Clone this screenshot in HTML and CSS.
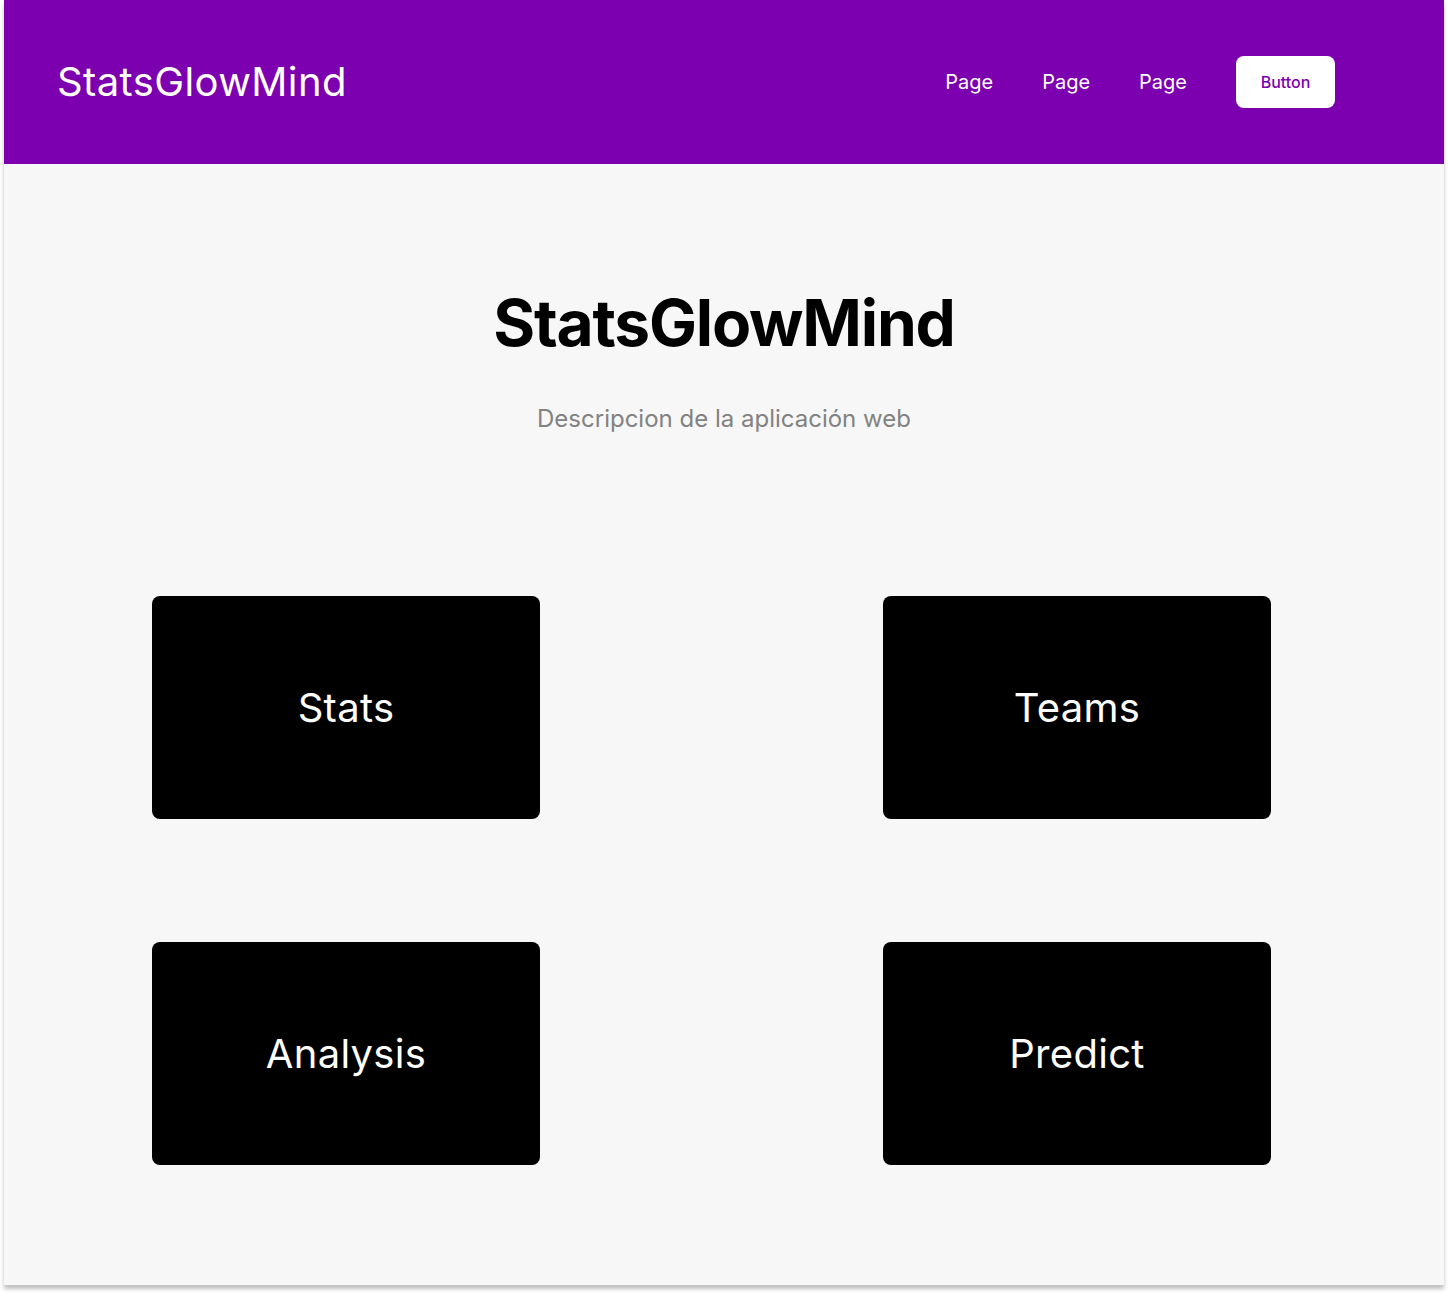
FILE: index.html
```html
<!DOCTYPE html>
<html lang="es">
<head>
<meta charset="utf-8">
<title>StatsGlowMind</title>
<link rel="stylesheet" href="styles.css">
</head>
<body>
<div class="frame">
  <header class="topbar">
    <div class="logo">StatsGlowMind</div>
    <nav class="nav">
      <a class="nav-link" href="#">Page</a>
      <a class="nav-link" href="#">Page</a>
      <a class="nav-link" href="#">Page</a>
      <a class="nav-btn" href="#">Button</a>
    </nav>
  </header>
  <main class="main">
    <section class="hero">
      <h1 class="hero-title">StatsGlowMind</h1>
      <p class="hero-sub">Descripcion de la aplicación web</p>
    </section>
    <section class="cards">
      <a class="card" href="#">Stats</a>
      <a class="card" href="#">Teams</a>
      <a class="card" href="#">Analysis</a>
      <a class="card" href="#">Predict</a>
    </section>
  </main>
</div>
</body>
</html>
```
FILE: styles.css
```css
* { box-sizing: border-box; }
html, body { margin: 0; padding: 0; background: #ffffff; }
body {
  font-family: Inter, "Noto Sans", "Liberation Sans", sans-serif;
  padding: 0 4px 8px;
}
.frame {
  width: 1440px;
  height: 1285px;
  background: #f7f7f7;
  box-shadow: 0 4px 4px rgba(0,0,0,0.25);
  display: flex;
  flex-direction: column;
}
.topbar {
  height: 164px;
  flex-shrink: 0;
  background: #7c00b0;
  display: flex;
  align-items: center;
  justify-content: space-between;
  padding: 0 109px 0 53px;
}
.logo {
  color: #ffffff;
  font-size: 40px;
  font-weight: 400;
  letter-spacing: 0.4px;
  margin-top: -1px;
}
.nav {
  display: flex;
  align-items: center;
  gap: 49px;
}
.nav-link {
  color: #ffffff;
  font-size: 20px;
  text-decoration: none;
}
.nav-btn {
  background: #ffffff;
  color: #7c00b0;
  font-size: 16px;
  font-weight: 500;
  text-decoration: none;
  width: 99px;
  height: 52px;
  border-radius: 8px;
  display: flex;
  align-items: center;
  justify-content: center;
}
.main {
  display: flex;
  flex-direction: column;
}
.hero {
  text-align: center;
  padding-top: 120px;
}
.hero-title {
  margin: 0;
  font-size: 64px;
  font-weight: 700;
  line-height: 77px;
  letter-spacing: -1.2px;
  color: #000000;
}
.hero-sub {
  margin: 43px 0 0;
  font-size: 24px;
  line-height: 29px;
  color: #828282;
}
.cards {
  display: grid;
  grid-template-columns: 388px 388px;
  column-gap: 343px;
  row-gap: 123px;
  padding-left: 148px;
  margin-top: 163px;
}
.card {
  height: 223px;
  background: #000000;
  border-radius: 8px;
  color: #ffffff;
  font-size: 40px;
  letter-spacing: 0.3px;
  text-decoration: none;
  display: flex;
  align-items: center;
  justify-content: center;
}
```
